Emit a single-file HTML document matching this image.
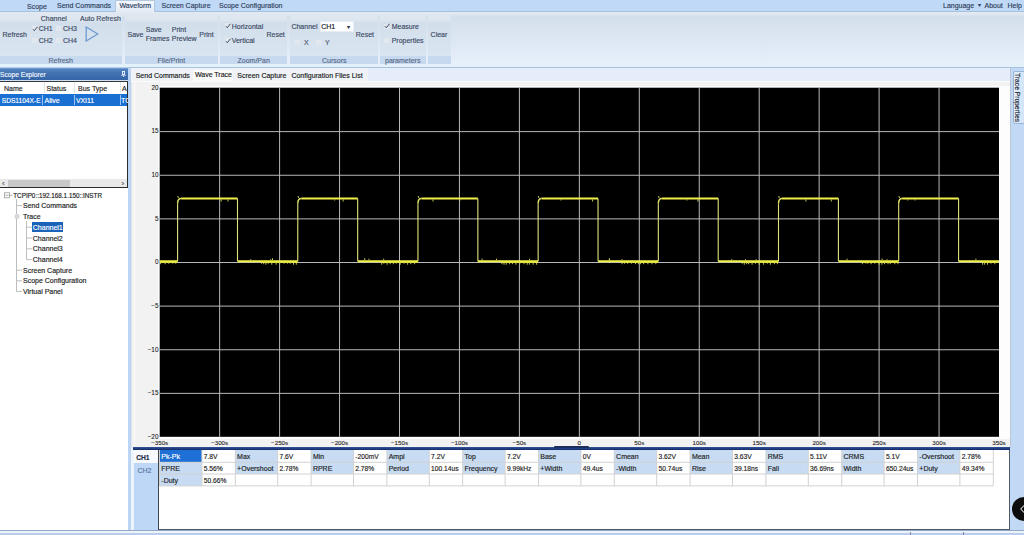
<!DOCTYPE html><html><head><meta charset="utf-8"><style>
*{margin:0;padding:0;box-sizing:border-box}
html,body{width:1024px;height:535px;overflow:hidden;background:#bfd8f6;font-family:"Liberation Sans",sans-serif}
.a{position:absolute}
.t{position:absolute;white-space:nowrap;line-height:1.2;-webkit-text-stroke:0.15px currentColor}
.ax{-webkit-text-stroke:0.1px currentColor}
</style></head><body><div class="a" style="left:0;top:0;width:1024px;height:11px;background:#c0d9f6"></div>
<div class="a" style="left:0;top:11px;width:1024px;height:1px;background:#a7c0db"></div>
<div class="a" style="left:115px;top:0;width:40px;height:12px;background:linear-gradient(#f4f8fd,#e3ebf5);border:1px solid #b3c8de;border-bottom:none"></div>
<div class="t" style="left:27px;top:3.30px;font-size:7px;color:#2f3f5c;font-weight:normal;">Scope</div>
<div class="t" style="left:57px;top:1.80px;font-size:7px;color:#2f3f5c;font-weight:normal;">Send Commands</div>
<div class="t" style="left:119.5px;top:1.80px;font-size:7px;color:#2f3f5c;font-weight:normal;">Waveform</div>
<div class="t" style="left:161.5px;top:1.80px;font-size:7px;color:#2f3f5c;font-weight:normal;">Screen Capture</div>
<div class="t" style="left:219px;top:1.80px;font-size:7px;color:#2f3f5c;font-weight:normal;">Scope Configuration</div>
<div class="t" style="left:943px;top:1.80px;font-size:7px;color:#2f3f5c;font-weight:normal;">Language</div>
<div class="t" style="left:984.5px;top:1.80px;font-size:7px;color:#2f3f5c;font-weight:normal;">About</div>
<div class="t" style="left:1007.5px;top:1.80px;font-size:7px;color:#2f3f5c;font-weight:normal;">Help</div>
<div class="t" style="left:978px;top:2.40px;font-size:6px;color:#2f3f5c;font-weight:normal;">&#9662;</div>
<div class="a" style="left:0;top:12px;width:1024px;height:54px;background:linear-gradient(#e3eaf2 0px,#dde6f0 3px,#d4dfec 4px,#e6effa 52px)"></div>
<div class="a" style="left:0;top:64px;width:1024px;height:3px;background:#e2f1fa"></div>
<div class="a" style="left:0;top:67px;width:1024px;height:1px;background:#a9c1da"></div>
<div class="a" style="left:0px;top:15px;width:121.90px;height:49px;background:linear-gradient(#dfe7f0 0px,#dce5ef 6px,#d3deeb 7px,#dae5f2 41px)"></div>
<div class="a" style="left:0px;top:55.5px;width:121.90px;height:8.5px;background:#c7d9ee"></div>
<div class="t" style="left:48.5px;top:56.80px;font-size:7px;color:#566a8a;font-weight:normal;">Refresh</div>
<div class="a" style="left:124.6px;top:15px;width:93.00px;height:49px;background:linear-gradient(#dfe7f0 0px,#dce5ef 6px,#d3deeb 7px,#dae5f2 41px)"></div>
<div class="a" style="left:124.6px;top:55.5px;width:93.00px;height:8.5px;background:#c7d9ee"></div>
<div class="t" style="left:157.5px;top:56.80px;font-size:7px;color:#566a8a;font-weight:normal;">File/Print</div>
<div class="a" style="left:220.4px;top:15px;width:66.90px;height:49px;background:linear-gradient(#dfe7f0 0px,#dce5ef 6px,#d3deeb 7px,#dae5f2 41px)"></div>
<div class="a" style="left:220.4px;top:55.5px;width:66.90px;height:8.5px;background:#c7d9ee"></div>
<div class="t" style="left:237.5px;top:56.80px;font-size:7px;color:#566a8a;font-weight:normal;">Zoom/Pan</div>
<div class="a" style="left:289.9px;top:15px;width:87.70px;height:49px;background:linear-gradient(#dfe7f0 0px,#dce5ef 6px,#d3deeb 7px,#dae5f2 41px)"></div>
<div class="a" style="left:289.9px;top:55.5px;width:87.70px;height:8.5px;background:#c7d9ee"></div>
<div class="t" style="left:322px;top:56.80px;font-size:7px;color:#566a8a;font-weight:normal;">Cursors</div>
<div class="a" style="left:380px;top:15px;width:45.60px;height:49px;background:linear-gradient(#dfe7f0 0px,#dce5ef 6px,#d3deeb 7px,#dae5f2 41px)"></div>
<div class="a" style="left:380px;top:55.5px;width:45.60px;height:8.5px;background:#c7d9ee"></div>
<div class="t" style="left:385px;top:56.80px;font-size:7px;color:#566a8a;font-weight:normal;">parameters</div>
<div class="a" style="left:428px;top:15px;width:22.80px;height:49px;background:linear-gradient(#dfe7f0 0px,#dce5ef 6px,#d3deeb 7px,#dae5f2 41px)"></div>
<div class="a" style="left:428px;top:55.5px;width:22.80px;height:8.5px;background:#c7d9ee"></div>
<div class="t" style="left:2.5px;top:31.30px;font-size:7px;color:#3b4a63;font-weight:normal;">Refresh</div>
<div class="t" style="left:40.75px;top:14.90px;font-size:7px;color:#3b4a63;font-weight:normal;">Channel</div>
<div class="t" style="left:80px;top:14.90px;font-size:7px;color:#3b4a63;font-weight:normal;">Auto Refresh</div>
<div class="t" style="left:38.75px;top:24.90px;font-size:7px;color:#3b4a63;font-weight:normal;">CH1</div>
<div class="t" style="left:63px;top:24.90px;font-size:7px;color:#3b4a63;font-weight:normal;">CH3</div>
<div class="t" style="left:38.75px;top:37.00px;font-size:7px;color:#3b4a63;font-weight:normal;">CH2</div>
<div class="t" style="left:63px;top:37.00px;font-size:7px;color:#3b4a63;font-weight:normal;">CH4</div>
<div class="a" style="left:32px;top:26.25px;width:5px;height:5px;border:1px solid #e3e9f1;background:#dfe6ee"></div><svg class="a" style="left:31.5px;top:25.75px" width="6" height="6" viewBox="0 0 6 6"><path d="M0.8 3.2 L2.3 4.8 L5.4 0.8" stroke="#3b4a63" stroke-width="1" fill="none"/></svg>
<div class="a" style="left:56px;top:26.25px;width:5px;height:5px;border:1px solid #e3e9f1;background:#dfe6ee"></div>
<div class="a" style="left:32px;top:38.25px;width:5px;height:5px;border:1px solid #e3e9f1;background:#dfe6ee"></div>
<div class="a" style="left:56px;top:38.25px;width:5px;height:5px;border:1px solid #e3e9f1;background:#dfe6ee"></div>
<svg class="a" style="left:85px;top:26px" width="14" height="16" viewBox="0 0 14 16"><path d="M1.2 1 L12.8 8 L1.2 15 Z" fill="none" stroke="#6b9bd0" stroke-width="1.3"/></svg>
<div class="t" style="left:127.5px;top:31.30px;font-size:7px;color:#3b4a63;font-weight:normal;">Save</div>
<div class="t" style="left:145.75px;top:26.20px;font-size:7px;color:#3b4a63;font-weight:normal;">Save</div>
<div class="t" style="left:145.75px;top:34.90px;font-size:7px;color:#3b4a63;font-weight:normal;">Frames</div>
<div class="t" style="left:171.75px;top:26.20px;font-size:7px;color:#3b4a63;font-weight:normal;">Print</div>
<div class="t" style="left:171.75px;top:34.90px;font-size:7px;color:#3b4a63;font-weight:normal;">Preview</div>
<div class="t" style="left:199.25px;top:31.30px;font-size:7px;color:#3b4a63;font-weight:normal;">Print</div>
<div class="a" style="left:225px;top:23.4px;width:5px;height:5px;border:1px solid #e3e9f1;background:#dfe6ee"></div><svg class="a" style="left:224.5px;top:22.9px" width="6" height="6" viewBox="0 0 6 6"><path d="M0.8 3.2 L2.3 4.8 L5.4 0.8" stroke="#3b4a63" stroke-width="1" fill="none"/></svg>
<div class="a" style="left:225px;top:38.1px;width:5px;height:5px;border:1px solid #e3e9f1;background:#dfe6ee"></div><svg class="a" style="left:224.5px;top:37.6px" width="6" height="6" viewBox="0 0 6 6"><path d="M0.8 3.2 L2.3 4.8 L5.4 0.8" stroke="#3b4a63" stroke-width="1" fill="none"/></svg>
<div class="t" style="left:231.7px;top:22.70px;font-size:7px;color:#3b4a63;font-weight:normal;">Horizontal</div>
<div class="t" style="left:231.7px;top:37.40px;font-size:7px;color:#3b4a63;font-weight:normal;">Vertical</div>
<div class="t" style="left:266.5px;top:31.30px;font-size:7px;color:#3b4a63;font-weight:normal;">Reset</div>
<div class="t" style="left:291.4px;top:23.20px;font-size:7px;color:#3b4a63;font-weight:normal;">Channel</div>
<div class="a" style="left:319.5px;top:21px;width:34px;height:11px;background:#fdfeff;border:1px solid #e6edf5"></div>
<div class="t" style="left:321.2px;top:23.40px;font-size:7px;color:#10161f;font-weight:normal;">CH1</div>
<div class="t" style="left:346.5px;top:24.30px;font-size:5.5px;color:#1f2a3a;font-weight:normal;">&#9662;</div>
<div class="a" style="left:294.5px;top:40.2px;width:5px;height:5px;border:1px solid #e3e9f1;background:#dfe6ee"></div>
<div class="a" style="left:315.5px;top:40.2px;width:5px;height:5px;border:1px solid #e3e9f1;background:#dfe6ee"></div>
<div class="t" style="left:304px;top:38.80px;font-size:7px;color:#4a5870;font-weight:normal;">X</div>
<div class="t" style="left:325px;top:38.80px;font-size:7px;color:#4a5870;font-weight:normal;">Y</div>
<div class="t" style="left:355.7px;top:31.30px;font-size:7px;color:#3b4a63;font-weight:normal;">Reset</div>
<div class="a" style="left:384px;top:23.5px;width:5px;height:5px;border:1px solid #e3e9f1;background:#dfe6ee"></div><svg class="a" style="left:383.5px;top:23px" width="6" height="6" viewBox="0 0 6 6"><path d="M0.8 3.2 L2.3 4.8 L5.4 0.8" stroke="#3b4a63" stroke-width="1" fill="none"/></svg>
<div class="a" style="left:384px;top:38.1px;width:5px;height:5px;border:1px solid #e3e9f1;background:#dfe6ee"></div>
<div class="t" style="left:391.7px;top:22.80px;font-size:7px;color:#3b4a63;font-weight:normal;">Measure</div>
<div class="t" style="left:391.7px;top:37.40px;font-size:7px;color:#3b4a63;font-weight:normal;">Properties</div>
<div class="t" style="left:430.6px;top:31.30px;font-size:7px;color:#3b4a63;font-weight:normal;">Clear</div>
<div class="a" style="left:0;top:67px;width:128.5px;height:1.5px;background:#b3cde8"></div>
<div class="a" style="left:0;top:68px;width:128.5px;height:11.5px;background:linear-gradient(#86a8d6 0px,#5282bf 1.2px,#4473b2 5px,#3767a8 10.8px)"></div>
<div class="t" style="left:0px;top:70.58px;font-size:6.7px;color:#f4f8fd;font-weight:normal;">Scope Explorer</div>
<div class="a" style="left:121.6px;top:70.8px;width:3.2px;height:4.2px;border:1px solid #e6eef9"></div>
<div class="a" style="left:120.8px;top:75px;width:4.8px;height:0.8px;background:#9fb8dc"></div>
<div class="a" style="left:122.8px;top:75.5px;width:0.8px;height:1.8px;background:#c8d8ef"></div>
<div class="a" style="left:0;top:79.5px;width:128.5px;height:1.5px;background:#cfe0f4"></div>
<div class="a" style="left:-1px;top:81px;width:129px;height:107px;background:#fff;border:1px solid #2b2b2b;border-top-color:#3a3a3a"></div>
<div class="t" style="left:4px;top:84.90px;font-size:7px;color:#222;font-weight:normal;">Name</div>
<div class="t" style="left:46.5px;top:84.90px;font-size:7px;color:#222;font-weight:normal;">Status</div>
<div class="t" style="left:78px;top:84.90px;font-size:7px;color:#222;font-weight:normal;">Bus Type</div>
<div class="t" style="left:122px;top:84.90px;font-size:7px;color:#222;font-weight:normal;">A</div>
<div class="a" style="left:43.5px;top:82px;width:1px;height:11px;background:#e4e4e4"></div>
<div class="a" style="left:73.5px;top:82px;width:1px;height:11px;background:#e4e4e4"></div>
<div class="a" style="left:119.5px;top:82px;width:1px;height:11px;background:#e4e4e4"></div>
<div class="a" style="left:0;top:93.5px;width:127px;height:12px;background:#1a6fd2"></div>
<div class="t" style="left:1.8px;top:96.94px;font-size:6.6px;color:#fff;font-weight:normal;">SDS1104X-E</div>
<div class="t" style="left:44.5px;top:96.70px;font-size:7px;color:#fff;font-weight:normal;">Alive</div>
<div class="t" style="left:76px;top:96.82px;font-size:6.8px;color:#fff;font-weight:normal;">VXI11</div>
<div class="t" style="left:121px;top:96.70px;font-size:7px;color:#fff;font-weight:normal;">TC</div>
<div class="a" style="left:42px;top:94.5px;width:1px;height:10px;background:#9cc2ee"></div>
<div class="a" style="left:74px;top:94.5px;width:1px;height:10px;background:#9cc2ee"></div>
<div class="a" style="left:119.5px;top:94.5px;width:1px;height:10px;background:#9cc2ee"></div>
<div class="a" style="left:0;top:179px;width:127px;height:8px;background:#e9e9e9"></div>
<div class="a" style="left:8px;top:179.5px;width:62px;height:7px;background:#c9c9c9"></div>
<div class="t" style="left:2px;top:179.20px;font-size:8px;color:#555;font-weight:normal;">&lsaquo;</div>
<div class="t" style="left:121.5px;top:179.20px;font-size:8px;color:#555;font-weight:normal;">&rsaquo;</div>
<div class="a" style="left:0;top:188px;width:127.5px;height:342px;background:#fff"></div>
<svg class="a" style="left:0;top:188px" width="60" height="110" viewBox="0 188 60 110"><g stroke="#bdbdbd" stroke-width="1" fill="none"><path d="M16.5 199 V291.5 M16.5 205.6 H22 M16.5 270.2 H22 M16.5 280.8 H22 M16.5 291.4 H22"/><path d="M26.5 221 V259.6 M26.5 227.2 H32 M26.5 238 H32 M26.5 248.8 H32 M26.5 259.6 H32"/></g><rect x="4.5" y="192.8" width="5" height="5" fill="none" stroke="#9a9a9a" stroke-width="0.8"/><path d="M5.5 195.3 H8.5 M9.5 195.3 H12.5" stroke="#9a9a9a" stroke-width="0.8"/><circle cx="17" cy="216.4" r="2.6" fill="#d8d8d8"/></svg>
<div class="a" style="left:32.3px;top:222.3px;width:30.5px;height:10px;background:#1b63b9"></div>
<div class="t" style="left:13.2px;top:192.09px;font-size:6.35px;color:#222;font-weight:normal;">TCPIP0::192.168.1.150::INSTR</div>
<div class="t" style="left:23px;top:202.10px;font-size:7px;color:#222;font-weight:normal;">Send Commands</div>
<div class="t" style="left:23px;top:212.90px;font-size:7px;color:#222;font-weight:normal;">Trace</div>
<div class="t" style="left:32.8px;top:223.80px;font-size:7px;color:#fff;font-weight:normal;">Channel1</div>
<div class="t" style="left:32.8px;top:234.50px;font-size:7px;color:#222;font-weight:normal;">Channel2</div>
<div class="t" style="left:32.8px;top:245.30px;font-size:7px;color:#222;font-weight:normal;">Channel3</div>
<div class="t" style="left:32.8px;top:256.00px;font-size:7px;color:#222;font-weight:normal;">Channel4</div>
<div class="t" style="left:23px;top:266.70px;font-size:7px;color:#222;font-weight:normal;">Screen Capture</div>
<div class="t" style="left:23px;top:277.30px;font-size:7px;color:#222;font-weight:normal;">Scope Configuration</div>
<div class="t" style="left:23px;top:287.90px;font-size:7px;color:#222;font-weight:normal;">Virtual Panel</div>
<div class="a" style="left:127.5px;top:68px;width:6px;height:462px;background:#bcd5f4"></div>
<div class="a" style="left:131px;top:448px;width:2.5px;height:82px;background:#eef4fb"></div>
<div class="a" style="left:131px;top:68px;width:879px;height:14px;background:#e4edf9"></div>
<div class="a" style="left:131px;top:68px;width:237px;height:13.3px;background:#eff3f8"></div>
<div class="a" style="left:192px;top:68.5px;width:41.5px;height:13.5px;background:#fbfbfb;border:1px solid #eef0f3;border-bottom:none"></div>
<div class="t" style="left:135.7px;top:72.10px;font-size:7px;color:#1a1a1a;font-weight:normal;">Send Commands</div>
<div class="t" style="left:194.9px;top:71.30px;font-size:7px;color:#1a1a1a;font-weight:normal;">Wave Trace</div>
<div class="t" style="left:237.3px;top:72.10px;font-size:7px;color:#1a1a1a;font-weight:normal;">Screen Capture</div>
<div class="t" style="left:291.4px;top:72.10px;font-size:7px;color:#1a1a1a;font-weight:normal;">Configuration Files List</div>
<div class="a" style="left:131px;top:81.3px;width:879px;height:367px;background:#f2f2f2;border-left:1px solid #e2e6ea"></div>
<div class="a" style="left:131px;top:81.3px;width:879px;height:1px;background:#fbfbfb"></div>
<div class="a" style="left:133.5px;top:82px;width:1px;height:366px;background:#fafafa"></div>
<div class="a" style="left:157.7px;top:85.7px;width:853px;height:353px;background:#fdfdfd"></div>
<svg class="a" style="left:0;top:0" width="1024" height="535" viewBox="0 0 1024 535"><rect x="159.7" y="87.7" width="839.3" height="349.1" fill="#000"/><path d="M219.65 87.7 V436.8 M279.60 87.7 V436.8 M339.55 87.7 V436.8 M399.50 87.7 V436.8 M459.45 87.7 V436.8 M519.40 87.7 V436.8 M579.35 87.7 V436.8 M639.30 87.7 V436.8 M699.25 87.7 V436.8 M759.20 87.7 V436.8 M819.15 87.7 V436.8 M879.10 87.7 V436.8 M939.05 87.7 V436.8 M159.7 131.62 H999.0 M159.7 175.25 H999.0 M159.7 218.88 H999.0 M159.7 262.50 H999.0 M159.7 306.12 H999.0 M159.7 349.75 H999.0 M159.7 393.38 H999.0" stroke="#b8b8b8" stroke-width="1" fill="none"/><path d="M159.7 261.2 H177.60 M237.50 261.2 H297.78 M357.68 261.2 H417.96 M477.86 261.2 H538.14 M598.04 261.2 H658.32 M718.22 261.2 H778.50 M838.40 261.2 H898.68 M958.58 261.2 H999.00" stroke="#f0f048" stroke-width="2" fill="none"/><path d="M181.10 198.5 H237.50 M301.28 198.5 H357.68 M421.46 198.5 H477.86 M541.64 198.5 H598.04 M661.82 198.5 H718.22 M782.00 198.5 H838.40 M902.18 198.5 H958.58" stroke="#f0f048" stroke-width="2.2" fill="none"/><path d="M177.60 261.2 V203.5 M237.50 198.5 V261.2 M297.78 261.2 V203.5 M357.68 198.5 V261.2 M417.96 261.2 V203.5 M477.86 198.5 V261.2 M538.14 261.2 V203.5 M598.04 198.5 V261.2 M658.32 261.2 V203.5 M718.22 198.5 V261.2 M778.50 261.2 V203.5 M838.40 198.5 V261.2 M898.68 261.2 V203.5 M958.58 198.5 V261.2" stroke="#e2e27a" stroke-width="1.1" fill="none"/><path d="M177.60 203.5 Q177.60 198.5 181.10 198.5 M297.78 203.5 Q297.78 198.5 301.28 198.5 M417.96 203.5 Q417.96 198.5 421.46 198.5 M538.14 203.5 Q538.14 198.5 541.64 198.5 M658.32 203.5 Q658.32 198.5 661.82 198.5 M778.50 203.5 Q778.50 198.5 782.00 198.5 M898.68 203.5 Q898.68 198.5 902.18 198.5" stroke="#e0e060" stroke-width="1.5" fill="none"/><path d="M160.7 262.4 H177.3 M261.5 262.4 H297.5 M381.7 262.4 H417.7 M501.9 262.4 H537.9 M622.0 262.4 H658.0 M742.2 262.4 H778.2 M862.4 262.4 H898.4 M982.6 262.4 H998.0" stroke="#e0e040" stroke-width="1.3" fill="none"/><path d="M160.7 262.2 v2 M165.1 262.2 v2 M168.7 262.2 v1.5 M172.8 262.2 v1.5 M175.7 262.2 v1.5 M261.5 262.2 v1.5 M263.7 262.2 v2 M265.9 262.2 v2.5 M268.2 262.2 v1.5 M271.8 262.2 v2.5 M276.1 262.2 v2.5 M279.6 262.2 v1.5 M284.0 262.2 v1.5 M287.4 262.2 v1.5 M290.2 262.2 v1.5 M293.5 262.2 v2.5 M296.3 262.2 v2.5 M272.5 260.2 v-2 M250.8 260.2 v-1 M270.6 260.2 v-1 M381.7 262.2 v2.5 M383.8 262.2 v1.5 M387.1 262.2 v2.5 M390.1 262.2 v2 M393.3 262.2 v2 M396.2 262.2 v1.5 M400.2 262.2 v2.5 M404.1 262.2 v1.5 M407.6 262.2 v2.5 M410.8 262.2 v2 M414.6 262.2 v2 M364.7 260.2 v-2 M383.7 260.2 v-1.5 M369.0 260.2 v-1.5 M501.9 262.2 v2 M504.0 262.2 v2.5 M506.2 262.2 v2.5 M509.6 262.2 v2 M512.4 262.2 v2 M515.9 262.2 v2.5 M519.9 262.2 v1.5 M524.0 262.2 v2 M527.2 262.2 v2.5 M529.4 262.2 v2.5 M533.1 262.2 v2.5 M536.6 262.2 v2.5 M496.5 260.2 v-1.5 M529.6 260.2 v-1.5 M482.1 260.2 v-1.5 M622.0 262.2 v2 M624.5 262.2 v1.5 M627.7 262.2 v1.5 M631.6 262.2 v1.5 M635.5 262.2 v2 M638.4 262.2 v2 M640.6 262.2 v2 M643.6 262.2 v2 M647.9 262.2 v2 M652.0 262.2 v2 M655.8 262.2 v2 M622.0 260.2 v-1 M609.3 260.2 v-1 M609.4 260.2 v-2 M742.2 262.2 v1.5 M744.3 262.2 v2.5 M746.7 262.2 v2 M748.7 262.2 v2 M752.1 262.2 v2.5 M755.5 262.2 v1.5 M759.2 262.2 v2.5 M763.6 262.2 v2.5 M767.3 262.2 v1.5 M770.4 262.2 v2.5 M774.4 262.2 v2 M777.4 262.2 v2 M756.1 260.2 v-1 M731.7 260.2 v-1 M745.5 260.2 v-1 M862.4 262.2 v2 M865.9 262.2 v1.5 M867.9 262.2 v1.5 M871.2 262.2 v2 M874.8 262.2 v1.5 M879.0 262.2 v2.5 M881.9 262.2 v2.5 M884.5 262.2 v2 M888.0 262.2 v2 M890.3 262.2 v2 M894.8 262.2 v2 M898.0 262.2 v2 M847.0 260.2 v-1.5 M882.1 260.2 v-1.5 M887.0 260.2 v-1 M982.6 262.2 v2.5 M984.6 262.2 v2.5 M987.5 262.2 v2.5 M990.9 262.2 v1.5 M994.8 262.2 v2 M975.9 260.2 v-1.5 M178.4 198.0 l-0.6 -2 M228.0 199.5 v2 M221.2 199.5 v2 M298.6 198.0 l-0.6 -2 M334.6 199.5 v1 M343.1 199.5 v2 M418.8 198.0 l-0.6 -2 M460.0 199.5 v1 M433.0 199.5 v2 M538.9 198.0 l-0.6 -2 M560.9 199.5 v1 M592.6 199.5 v2 M659.1 198.0 l-0.6 -2 M686.9 199.5 v1 M697.9 199.5 v2 M779.3 198.0 l-0.6 -2 M805.9 199.5 v2 M831.3 199.5 v2 M899.5 198.0 l-0.6 -2 M907.7 199.5 v1 M915.0 199.5 v1" stroke="#dada58" stroke-width="0.9" fill="none"/></svg>
<div class="t ax" style="left:119.69999999999999px;top:83.70px;width:38.8px;text-align:right;font-size:6.4px;color:#1e1e1e">20</div>
<div class="t ax" style="left:119.69999999999999px;top:127.34px;width:38.8px;text-align:right;font-size:6.4px;color:#1e1e1e">15</div>
<div class="t ax" style="left:119.69999999999999px;top:170.98px;width:38.8px;text-align:right;font-size:6.4px;color:#1e1e1e">10</div>
<div class="t ax" style="left:119.69999999999999px;top:214.61px;width:38.8px;text-align:right;font-size:6.4px;color:#1e1e1e">5</div>
<div class="t ax" style="left:119.69999999999999px;top:258.25px;width:38.8px;text-align:right;font-size:6.4px;color:#1e1e1e">0</div>
<div class="t ax" style="left:119.69999999999999px;top:301.89px;width:38.8px;text-align:right;font-size:6.4px;color:#1e1e1e">&minus;5</div>
<div class="t ax" style="left:119.69999999999999px;top:345.53px;width:38.8px;text-align:right;font-size:6.4px;color:#1e1e1e">&minus;10</div>
<div class="t ax" style="left:119.69999999999999px;top:389.16px;width:38.8px;text-align:right;font-size:6.4px;color:#1e1e1e">&minus;15</div>
<div class="t ax" style="left:119.69999999999999px;top:432.80px;width:38.8px;text-align:right;font-size:6.4px;color:#1e1e1e">&minus;20</div>
<div class="t ax" style="left:139.70px;top:439.10px;width:40px;text-align:center;font-size:6.2px;color:#1e1e1e">&minus;350s</div>
<div class="t ax" style="left:199.65px;top:439.10px;width:40px;text-align:center;font-size:6.2px;color:#1e1e1e">&minus;300s</div>
<div class="t ax" style="left:259.60px;top:439.10px;width:40px;text-align:center;font-size:6.2px;color:#1e1e1e">&minus;250s</div>
<div class="t ax" style="left:319.55px;top:439.10px;width:40px;text-align:center;font-size:6.2px;color:#1e1e1e">&minus;200s</div>
<div class="t ax" style="left:379.50px;top:439.10px;width:40px;text-align:center;font-size:6.2px;color:#1e1e1e">&minus;150s</div>
<div class="t ax" style="left:439.45px;top:439.10px;width:40px;text-align:center;font-size:6.2px;color:#1e1e1e">&minus;100s</div>
<div class="t ax" style="left:499.40px;top:439.10px;width:40px;text-align:center;font-size:6.2px;color:#1e1e1e">&minus;50s</div>
<div class="t ax" style="left:559.35px;top:439.10px;width:40px;text-align:center;font-size:6.2px;color:#1e1e1e">0</div>
<div class="t ax" style="left:619.30px;top:439.10px;width:40px;text-align:center;font-size:6.2px;color:#1e1e1e">50s</div>
<div class="t ax" style="left:679.25px;top:439.10px;width:40px;text-align:center;font-size:6.2px;color:#1e1e1e">100s</div>
<div class="t ax" style="left:739.20px;top:439.10px;width:40px;text-align:center;font-size:6.2px;color:#1e1e1e">150s</div>
<div class="t ax" style="left:799.15px;top:439.10px;width:40px;text-align:center;font-size:6.2px;color:#1e1e1e">200s</div>
<div class="t ax" style="left:859.10px;top:439.10px;width:40px;text-align:center;font-size:6.2px;color:#1e1e1e">250s</div>
<div class="t ax" style="left:919.05px;top:439.10px;width:40px;text-align:center;font-size:6.2px;color:#1e1e1e">300s</div>
<div class="t ax" style="left:979.00px;top:439.10px;width:40px;text-align:center;font-size:6.2px;color:#1e1e1e">350s</div>
<div class="a" style="left:133px;top:447.3px;width:877px;height:2.7px;background:linear-gradient(#34549a,#0f2a6a)"></div>
<div class="a" style="left:553.5px;top:446px;width:35px;height:2px;background:#1a2f60;border-radius:1px 1px 0 0"></div>
<div class="a" style="left:556px;top:446.6px;width:30px;height:0.8px;background:repeating-linear-gradient(90deg,#7f93bb 0 1px,transparent 1px 2.5px)"></div>
<div class="a" style="left:133.5px;top:450px;width:24.5px;height:80px;background:#bfd7f6"></div>
<div class="a" style="left:133.5px;top:450px;width:24px;height:13px;background:#f7f9fc"></div>
<div class="t" style="left:136.2px;top:453.58px;font-size:6.7px;color:#1a2a44;font-weight:bold;">CH1</div>
<div class="t" style="left:137.5px;top:467.30px;font-size:7px;color:#5b76a4;font-weight:normal;">CH2</div>
<div class="a" style="left:157.7px;top:450px;width:852.5px;height:80px;background:#fff;border-left:1px solid #3c4450;border-right:1px solid #505860;border-bottom:1px solid #505860"></div>
<div class="a" style="left:159.50px;top:450.00px;width:42.40px;height:12.30px;background:#1f70d6"></div>
<div class="t" style="left:161.3px;top:452.95px;font-size:7px;color:#fff;font-weight:normal;">Pk-Pk</div>
<div class="t" style="left:203.70000000000002px;top:453.13px;font-size:6.7px;color:#222;font-weight:normal;">7.8V</div>
<div class="a" style="left:235.30px;top:450.00px;width:42.40px;height:12.30px;background:#c7dbf3"></div>
<div class="t" style="left:237.10000000000002px;top:452.95px;font-size:7px;color:#222;font-weight:normal;">Max</div>
<div class="t" style="left:279.5px;top:453.13px;font-size:6.7px;color:#222;font-weight:normal;">7.6V</div>
<div class="a" style="left:311.10px;top:450.00px;width:42.40px;height:12.30px;background:#c7dbf3"></div>
<div class="t" style="left:312.90000000000003px;top:452.95px;font-size:7px;color:#222;font-weight:normal;">Min</div>
<div class="t" style="left:355.3px;top:453.13px;font-size:6.7px;color:#222;font-weight:normal;">-200mV</div>
<div class="a" style="left:386.90px;top:450.00px;width:42.40px;height:12.30px;background:#c7dbf3"></div>
<div class="t" style="left:388.7px;top:452.95px;font-size:7px;color:#222;font-weight:normal;">Ampl</div>
<div class="t" style="left:431.09999999999997px;top:453.13px;font-size:6.7px;color:#222;font-weight:normal;">7.2V</div>
<div class="a" style="left:462.70px;top:450.00px;width:42.40px;height:12.30px;background:#c7dbf3"></div>
<div class="t" style="left:464.5px;top:452.95px;font-size:7px;color:#222;font-weight:normal;">Top</div>
<div class="t" style="left:506.9px;top:453.13px;font-size:6.7px;color:#222;font-weight:normal;">7.2V</div>
<div class="a" style="left:538.50px;top:450.00px;width:42.40px;height:12.30px;background:#c7dbf3"></div>
<div class="t" style="left:540.3px;top:452.95px;font-size:7px;color:#222;font-weight:normal;">Base</div>
<div class="t" style="left:582.6999999999999px;top:453.13px;font-size:6.7px;color:#222;font-weight:normal;">0V</div>
<div class="a" style="left:614.30px;top:450.00px;width:42.40px;height:12.30px;background:#c7dbf3"></div>
<div class="t" style="left:616.0999999999999px;top:452.95px;font-size:7px;color:#222;font-weight:normal;">Cmean</div>
<div class="t" style="left:658.4999999999999px;top:453.13px;font-size:6.7px;color:#222;font-weight:normal;">3.62V</div>
<div class="a" style="left:690.10px;top:450.00px;width:42.40px;height:12.30px;background:#c7dbf3"></div>
<div class="t" style="left:691.9px;top:452.95px;font-size:7px;color:#222;font-weight:normal;">Mean</div>
<div class="t" style="left:734.3px;top:453.13px;font-size:6.7px;color:#222;font-weight:normal;">3.63V</div>
<div class="a" style="left:765.90px;top:450.00px;width:42.40px;height:12.30px;background:#c7dbf3"></div>
<div class="t" style="left:767.6999999999999px;top:452.95px;font-size:7px;color:#222;font-weight:normal;">RMS</div>
<div class="t" style="left:810.0999999999999px;top:453.13px;font-size:6.7px;color:#222;font-weight:normal;">5.11V</div>
<div class="a" style="left:841.70px;top:450.00px;width:42.40px;height:12.30px;background:#c7dbf3"></div>
<div class="t" style="left:843.4999999999999px;top:452.95px;font-size:7px;color:#222;font-weight:normal;">CRMS</div>
<div class="t" style="left:885.8999999999999px;top:453.13px;font-size:6.7px;color:#222;font-weight:normal;">5.1V</div>
<div class="a" style="left:917.50px;top:450.00px;width:42.40px;height:12.30px;background:#c7dbf3"></div>
<div class="t" style="left:919.3px;top:452.95px;font-size:7px;color:#222;font-weight:normal;">-Overshoot</div>
<div class="t" style="left:961.6999999999999px;top:453.13px;font-size:6.7px;color:#222;font-weight:normal;">2.78%</div>
<div class="a" style="left:159.50px;top:462.30px;width:42.40px;height:11.70px;background:#c7dbf3"></div>
<div class="t" style="left:161.3px;top:464.95px;font-size:7px;color:#222;font-weight:normal;">FPRE</div>
<div class="t" style="left:203.70000000000002px;top:465.13px;font-size:6.7px;color:#222;font-weight:normal;">5.56%</div>
<div class="a" style="left:235.30px;top:462.30px;width:42.40px;height:11.70px;background:#c7dbf3"></div>
<div class="t" style="left:237.10000000000002px;top:464.95px;font-size:7px;color:#222;font-weight:normal;">+Overshoot</div>
<div class="t" style="left:279.5px;top:465.13px;font-size:6.7px;color:#222;font-weight:normal;">2.78%</div>
<div class="a" style="left:311.10px;top:462.30px;width:42.40px;height:11.70px;background:#c7dbf3"></div>
<div class="t" style="left:312.90000000000003px;top:464.95px;font-size:7px;color:#222;font-weight:normal;">RPRE</div>
<div class="t" style="left:355.3px;top:465.13px;font-size:6.7px;color:#222;font-weight:normal;">2.78%</div>
<div class="a" style="left:386.90px;top:462.30px;width:42.40px;height:11.70px;background:#c7dbf3"></div>
<div class="t" style="left:388.7px;top:464.95px;font-size:7px;color:#222;font-weight:normal;">Period</div>
<div class="t" style="left:431.09999999999997px;top:465.13px;font-size:6.7px;color:#222;font-weight:normal;">100.14us</div>
<div class="a" style="left:462.70px;top:462.30px;width:42.40px;height:11.70px;background:#c7dbf3"></div>
<div class="t" style="left:464.5px;top:464.95px;font-size:7px;color:#222;font-weight:normal;">Frequency</div>
<div class="t" style="left:506.9px;top:465.13px;font-size:6.7px;color:#222;font-weight:normal;">9.99kHz</div>
<div class="a" style="left:538.50px;top:462.30px;width:42.40px;height:11.70px;background:#c7dbf3"></div>
<div class="t" style="left:540.3px;top:464.95px;font-size:7px;color:#222;font-weight:normal;">+Width</div>
<div class="t" style="left:582.6999999999999px;top:465.13px;font-size:6.7px;color:#222;font-weight:normal;">49.4us</div>
<div class="a" style="left:614.30px;top:462.30px;width:42.40px;height:11.70px;background:#c7dbf3"></div>
<div class="t" style="left:616.0999999999999px;top:464.95px;font-size:7px;color:#222;font-weight:normal;">-Width</div>
<div class="t" style="left:658.4999999999999px;top:465.13px;font-size:6.7px;color:#222;font-weight:normal;">50.74us</div>
<div class="a" style="left:690.10px;top:462.30px;width:42.40px;height:11.70px;background:#c7dbf3"></div>
<div class="t" style="left:691.9px;top:464.95px;font-size:7px;color:#222;font-weight:normal;">Rise</div>
<div class="t" style="left:734.3px;top:465.13px;font-size:6.7px;color:#222;font-weight:normal;">39.18ns</div>
<div class="a" style="left:765.90px;top:462.30px;width:42.40px;height:11.70px;background:#c7dbf3"></div>
<div class="t" style="left:767.6999999999999px;top:464.95px;font-size:7px;color:#222;font-weight:normal;">Fall</div>
<div class="t" style="left:810.0999999999999px;top:465.13px;font-size:6.7px;color:#222;font-weight:normal;">36.69ns</div>
<div class="a" style="left:841.70px;top:462.30px;width:42.40px;height:11.70px;background:#c7dbf3"></div>
<div class="t" style="left:843.4999999999999px;top:464.95px;font-size:7px;color:#222;font-weight:normal;">Width</div>
<div class="t" style="left:885.8999999999999px;top:465.13px;font-size:6.7px;color:#222;font-weight:normal;">650.24us</div>
<div class="a" style="left:917.50px;top:462.30px;width:42.40px;height:11.70px;background:#c7dbf3"></div>
<div class="t" style="left:919.3px;top:464.95px;font-size:7px;color:#222;font-weight:normal;">+Duty</div>
<div class="t" style="left:961.6999999999999px;top:465.13px;font-size:6.7px;color:#222;font-weight:normal;">49.34%</div>
<div class="a" style="left:159.50px;top:474.00px;width:42.40px;height:11.90px;background:#c7dbf3"></div>
<div class="t" style="left:161.3px;top:476.75px;font-size:7px;color:#222;font-weight:normal;">-Duty</div>
<div class="t" style="left:203.70000000000002px;top:476.93px;font-size:6.7px;color:#222;font-weight:normal;">50.66%</div>
<div class="a" style="left:235.30px;top:474.00px;width:42.40px;height:11.90px;background:#fff"></div>
<div class="a" style="left:311.10px;top:474.00px;width:42.40px;height:11.90px;background:#fff"></div>
<div class="a" style="left:386.90px;top:474.00px;width:42.40px;height:11.90px;background:#fff"></div>
<div class="a" style="left:462.70px;top:474.00px;width:42.40px;height:11.90px;background:#fff"></div>
<div class="a" style="left:538.50px;top:474.00px;width:42.40px;height:11.90px;background:#fff"></div>
<div class="a" style="left:614.30px;top:474.00px;width:42.40px;height:11.90px;background:#fff"></div>
<div class="a" style="left:690.10px;top:474.00px;width:42.40px;height:11.90px;background:#fff"></div>
<div class="a" style="left:765.90px;top:474.00px;width:42.40px;height:11.90px;background:#fff"></div>
<div class="a" style="left:841.70px;top:474.00px;width:42.40px;height:11.90px;background:#fff"></div>
<div class="a" style="left:917.50px;top:474.00px;width:42.40px;height:11.90px;background:#fff"></div>
<svg class="a" style="left:0;top:0" width="1024" height="535" viewBox="0 0 1024 535"><path d="M159.50 450 V485.9 M201.90 450 V485.9 M235.30 450 V485.9 M277.70 450 V485.9 M311.10 450 V485.9 M353.50 450 V485.9 M386.90 450 V485.9 M429.30 450 V485.9 M462.70 450 V485.9 M505.10 450 V485.9 M538.50 450 V485.9 M580.90 450 V485.9 M614.30 450 V485.9 M656.70 450 V485.9 M690.10 450 V485.9 M732.50 450 V485.9 M765.90 450 V485.9 M808.30 450 V485.9 M841.70 450 V485.9 M884.10 450 V485.9 M917.50 450 V485.9 M959.90 450 V485.9 M993.30 450 V485.9 M159.5 462.30 H993.30 M159.5 474.00 H993.30 M159.5 485.90 H993.30" stroke="#d2d2d2" stroke-width="1" fill="none"/></svg>
<div class="a" style="left:1010px;top:68px;width:14px;height:467px;background:#c2d9f5"></div>
<div class="a" style="left:1009.5px;top:68px;width:1px;height:380px;background:#b9c6d6"></div>
<div class="a" style="left:1012.5px;top:71px;width:13px;height:52.5px;background:linear-gradient(90deg,#e4eef9,#d0e2f6);border:1px solid #98b4d8;border-radius:2px"></div>
<div class="t" style="left:1012px;top:71px;width:11px;height:53px;font-size:6.7px;color:#15202e;writing-mode:vertical-rl;text-align:center;line-height:11px">Trace Properties</div>
<div class="a" style="left:1012px;top:497px;width:24px;height:24px;border-radius:50%;background:#0c0c0c"></div>
<svg class="a" style="left:1017px;top:503px" width="8" height="12" viewBox="0 0 8 12"><path d="M7 2.5 L3.8 6 L7 9.5" stroke="#d0d0d0" stroke-width="1.1" fill="none"/></svg>
<div class="a" style="left:0;top:530px;width:1024px;height:5px;background:#b7cdea"></div>
<div class="a" style="left:0;top:530px;width:1024px;height:1px;background:#90a8c6"></div>
<div class="a" style="left:0;top:531px;width:1024px;height:1.5px;background:#eef3f9"></div>
<div class="a" style="left:909.5px;top:531.5px;width:1px;height:3.5px;background:#7a8aa0"></div>
<div class="a" style="left:962.5px;top:531.5px;width:1px;height:3.5px;background:#7a8aa0"></div></body></html>
